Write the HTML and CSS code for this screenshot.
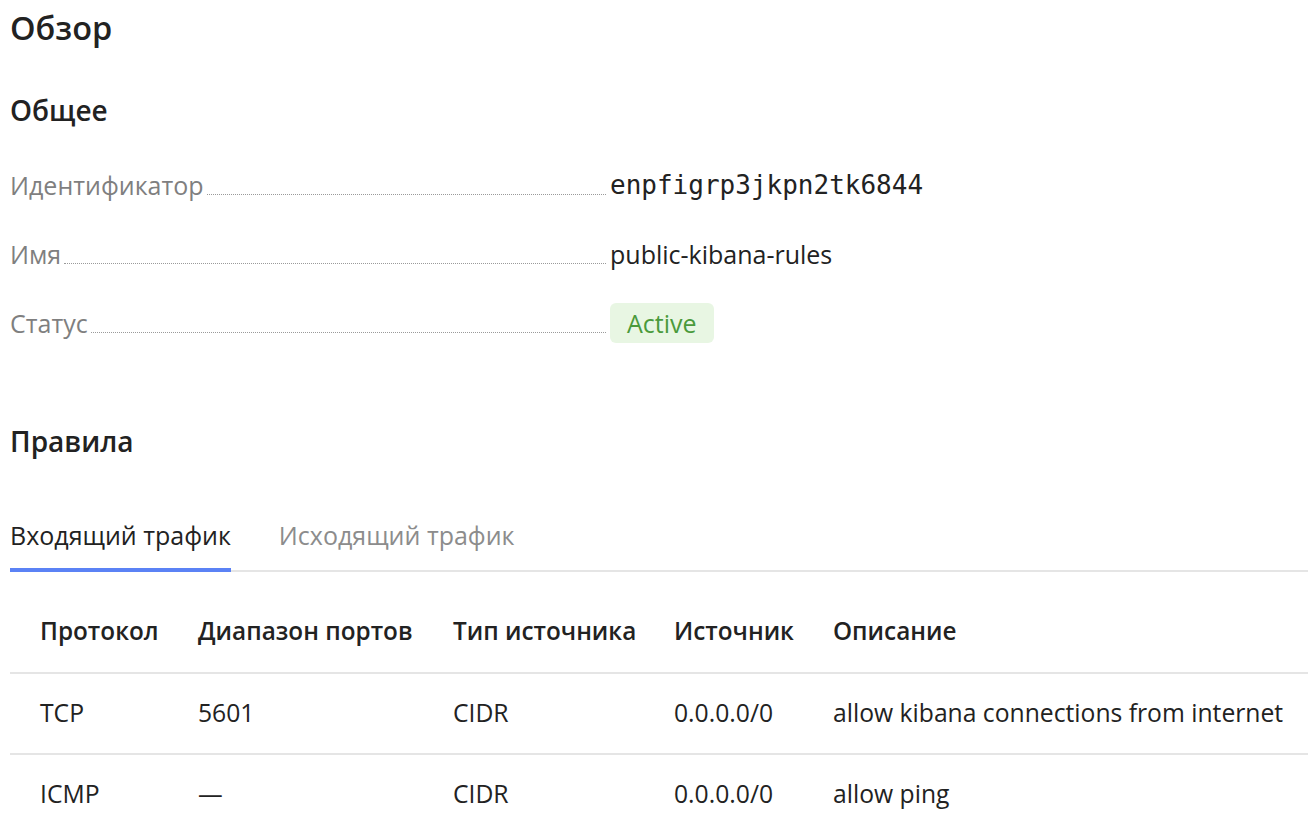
FILE: index.html
```html
<!DOCTYPE html>
<html lang="ru">
<head>
<meta charset="utf-8">
<title>Обзор</title>
<link rel="stylesheet" href="styles.css">
</head>
<body>
<main class="page">
  <h1 class="title">Обзор</h1>
  <h2 class="section section-general">Общее</h2>
  <div class="props">
    <div class="prop">
      <div class="prop-label"><span>Идентификатор</span><i class="dots"></i></div>
      <div class="prop-value mono">enpfigrp3jkpn2tk6844</div>
    </div>
    <div class="prop">
      <div class="prop-label"><span>Имя</span><i class="dots"></i></div>
      <div class="prop-value">public-kibana-rules</div>
    </div>
    <div class="prop">
      <div class="prop-label"><span>Статус</span><i class="dots"></i></div>
      <div class="prop-value"><span class="badge">Active</span></div>
    </div>
  </div>
  <h2 class="section section-rules">Правила</h2>
  <div class="tabs">
    <div class="tab tab-active">Входящий трафик</div>
    <div class="tab">Исходящий трафик</div>
  </div>
  <div class="table">
    <div class="tr th">
      <div class="td">Протокол</div>
      <div class="td">Диапазон портов</div>
      <div class="td">Тип источника</div>
      <div class="td">Источник</div>
      <div class="td">Описание</div>
    </div>
    <div class="tr">
      <div class="td">TCP</div>
      <div class="td">5601</div>
      <div class="td">CIDR</div>
      <div class="td">0.0.0.0/0</div>
      <div class="td">allow kibana connections from internet</div>
    </div>
    <div class="tr">
      <div class="td">ICMP</div>
      <div class="td">—</div>
      <div class="td">CIDR</div>
      <div class="td">0.0.0.0/0</div>
      <div class="td">allow ping</div>
    </div>
  </div>
</main>
</body>
</html>
```
FILE: styles.css
```css
html, body {
  margin: 0;
  padding: 0;
  background: #fff;
}
body {
  font-family: "Open Sans", "Liberation Sans", sans-serif;
  color: #222;
  font-size: 25px;
}
.page {
  padding: 0 0 0 10px;
}
.title {
  margin: 8px 0 0;
  font-size: 32.5px;
  line-height: 40px;
  font-weight: 600;
}
.section {
  font-size: 28px;
  line-height: 32px;
  font-weight: 600;
  margin: 0;
}
.section-general { margin-top: 46px; }
.section-rules { margin-top: 82px; }
.props {
  margin-top: 39px;
  display: flex;
  flex-direction: column;
  gap: 29px;
}
.prop {
  display: grid;
  grid-template-columns: 596px 1fr;
  column-gap: 4px;
  height: 40px;
  align-items: center;
}
.prop-label {
  display: flex;
  align-items: baseline;
  color: #7f7f7f;
  line-height: 40px;
}
.dots {
  flex: 1;
  margin-left: 3px;
  border-bottom: 1px dotted #9a9a9a;
}
.prop-value {
  line-height: 40px;
}
.mono {
  font-family: "DejaVu Sans Mono", "Liberation Mono", monospace;
  font-size: 26px;
}
.badge {
  display: inline-block;
  height: 40px;
  line-height: 40px;
  padding: 0 17px;
  border-radius: 6px;
  background: #e8f6e3;
  color: #4a9a3b;
  font-weight: 500;
}
.tabs {
  margin-top: 62px;
  display: flex;
  gap: 48px;
  border-bottom: 2px solid #e5e5e5;
}
.tab {
  line-height: 32px;
  padding-bottom: 17px;
  color: #8c8c8c;
  margin-bottom: -2px;
  border-bottom: 4px solid transparent;
}
.tab-active {
  color: #222;
  border-bottom-color: #5b82f5;
}
.table {
  margin-top: 18px;
}
.tr {
  display: grid;
  grid-template-columns: 188px 255px 221px 159px 1fr;
  height: 76px;
  padding-bottom: 3px;
  align-items: center;
  border-top: 2px solid #e5e5e5;
  font-size: 24.7px;
}
.tr.th {
  border-top: none;
  height: 82px;
  padding-bottom: 0;
  align-items: end;
  font-size: 24.3px;
  font-weight: 600;
}
.th .td {
  line-height: 40px;
  padding-bottom: 21px;
}
.td:first-child {
  padding-left: 30px;
}
```
